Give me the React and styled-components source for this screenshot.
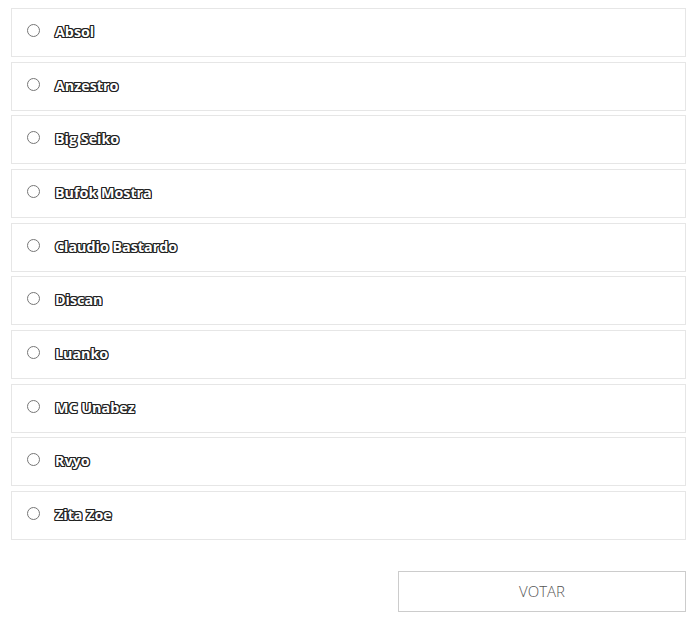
import React, { useState } from 'react';
import styled, { createGlobalStyle } from 'styled-components';

const GlobalStyle = createGlobalStyle`
    html, body{
        margin:0;
        padding:0;
        background:#fff;
    }
    body{
        font-family:"Open Sans", "Liberation Sans", sans-serif;
    }
`

const Poll = styled.form`
    padding:8px 6px 0 11px;
    display:flex;
    flex-direction:column;
`

const Options = styled.div`
    display:flex;
    flex-direction:column;
    gap:4.67px;
`

const Option = styled.label`
    box-sizing:border-box;
    height:49px;
    border:1px solid #e6e6e6;
    display:flex;
    align-items:center;
    padding-left:15px;
    cursor:pointer;

    input{
        margin:0 15px 0 0;
        width:13px;
        height:13px;
        position:relative;
        top:-2px;
    }
`

const Name = styled.span`
    font-size:14.3px;
    font-weight:700;
    color:#fff;
    margin-top:-2px;
    text-shadow:
        -1px -1px 0 #222,
        1px -1px 0 #222,
        -1px 1px 0 #222,
        1px 1px 0 #222,
        0 1px 0 #222,
        0 -1px 0 #222,
        1px 0 0 #222,
        -1px 0 0 #222;
`

const Actions = styled.div`
    display:flex;
    justify-content:flex-end;
    padding:31px 0 0 0;
`

const VoteButton = styled.button`
    box-sizing:border-box;
    width:288px;
    height:41px;
    background:#fff;
    border:1px solid #ccc;
    font-family:"Open Sans", "Liberation Sans", sans-serif;
    font-size:15px;
    font-weight:300;
    color:#555;
    cursor:pointer;
`

const candidates = [
    'Absol',
    'Anzestro',
    'Big Seiko',
    'Bufok Mostra',
    'Claudio Bastardo',
    'Discan',
    'Luanko',
    'MC Unabez',
    'Rvyo',
    'Zita Zoe',
]

const App = () => {
    const [choice, setChoice] = useState(null)

    return (
        <>
            <GlobalStyle/>
            <Poll onSubmit={e => e.preventDefault()}>
                <Options>
                    {candidates.map(name => (
                        <Option key={name}>
                            <input
                                type="radio"
                                name="poll"
                                checked={choice === name}
                                onChange={() => setChoice(name)}
                            />
                            <Name>{name}</Name>
                        </Option>
                    ))}
                </Options>
                <Actions>
                    <VoteButton type="submit">VOTAR</VoteButton>
                </Actions>
            </Poll>
        </>
    )
}

export default App
